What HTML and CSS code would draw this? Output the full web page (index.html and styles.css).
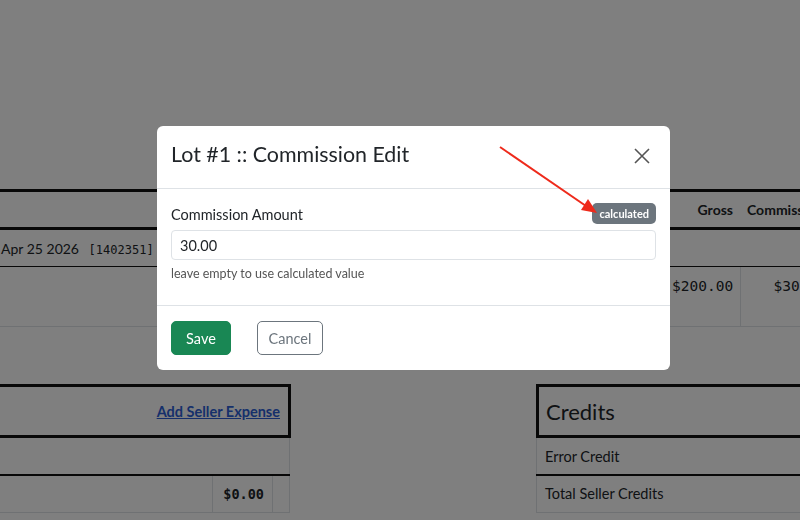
FILE: index.html
```html
<html>
    <head>
        <title>Lot Commission</title>
        <link rel="stylesheet" href="styles.css">
    </head>

    <body>
        <div class="page">
            <table class="lots">
                <tr class="lots-head">
                    <th class="c-desc"></th>
                    <th class="c-gross">Gross</th>
                    <th class="c-comm">Commission</th>
                </tr>
                <tr class="lots-group">
                    <td colspan="3">Apr 25 2026 <span class="mono">[1402351]</span></td>
                </tr>
                <tr class="lots-row">
                    <td></td>
                    <td class="num">$200.00</td>
                    <td class="num left">$30.00</td>
                </tr>
            </table>

            <div class="panels">
                <div class="panel expenses">
                    <div class="panel-title right">
                        <a href="#" class="link">Add Seller Expense</a>
                    </div>
                    <table class="ptable">
                        <tr class="blank"><td colspan="3"></td></tr>
                        <tr class="total">
                            <td class="wide"></td>
                            <td class="num">$0.00</td>
                            <td class="tiny"></td>
                        </tr>
                    </table>
                </div>

                <div class="panel credits">
                    <div class="panel-title">
                        <h2>Credits</h2>
                    </div>
                    <table class="ptable">
                        <tr class="blank"><td>Error Credit</td></tr>
                        <tr class="total"><td>Total Seller Credits</td></tr>
                    </table>
                </div>
            </div>
        </div>

        <div class="backdrop">
            <div class="modal">
                <div class="modal-header">
                    <h5 class="modal-title">Lot #1 :: Commission Edit</h5>
                    <button class="close">
                        <svg width="16" height="16" viewBox="0 0 16 16">
                            <path d="M1 1 L15 15 M15 1 L1 15" stroke="#555" stroke-width="1.6" fill="none"/>
                        </svg>
                    </button>
                </div>
                <div class="modal-body">
                    <div class="label-row">
                        <label>Commission Amount</label>
                        <span class="badge">calculated</span>
                    </div>
                    <input class="field" type="text" value="30.00">
                    <div class="help">leave empty to use calculated value</div>
                </div>
                <div class="modal-footer">
                    <button class="btn save">Save</button>
                    <button class="btn cancel">Cancel</button>
                </div>
            </div>

            <svg class="arrow" width="800" height="520" viewBox="0 0 800 520">
                <line x1="500" y1="147" x2="586" y2="206" stroke="#ee2a1b" stroke-width="2"/>
                <polygon points="597,213 581,210 588,199" fill="#ee2a1b"/>
            </svg>
        </div>
    </body>
</html>
```

FILE: styles.css
```css
body {
    margin: 0;
    font-family: Lato, 'Open Sans', sans-serif;
    color: #212529;
    background: #fff;
    overflow: hidden;
    width: 800px;
    height: 520px;
}

.page {
    padding-top: 189px;
    width: 800px;
}

.mono {
    font-family: 'DejaVu Sans Mono', monospace;
    font-size: 12px;
    margin-left: 6px;
}

/* lot table */
.lots {
    border-collapse: collapse;
    width: 880px;
    table-layout: fixed;
}

.c-desc { width: 651px; }
.c-gross { width: 61px; }
.c-comm { width: 126px; }

.lots-head th {
    border-top: 3px solid #111;
    border-bottom: 3px solid #111;
    height: 38px;
    padding: 0 7px;
    font-size: 14px;
    font-weight: bold;
    text-align: right;
}

.lots-head .c-comm {
    text-align: left;
}

.lots-group td {
    height: 38px;
    padding: 0 1px;
    font-size: 14px;
    border-bottom: 1px solid #111;
}

.lots-row td {
    height: 60px;
    vertical-align: top;
    padding: 11px 7px 0;
    border-bottom: 1px solid #dee2e6;
}

.num {
    font-family: 'DejaVu Sans Mono', monospace;
    font-size: 14.5px;
    text-align: right;
}

.lots-row .num {
    border-right: 1px solid #dee2e6;
}

.lots-row .left {
    padding-left: 33px;
    text-align: left;
}

/* panels */
.panels {
    display: flex;
    justify-content: space-between;
    margin-top: 57px;
}

.panel {
    flex: none;
}

.expenses {
    width: 310px;
    margin-left: -19px;
}

.credits {
    width: 300px;
    margin-right: -36px;
}

.panel-title {
    border: 3px solid #111;
    height: 47px;
    display: flex;
    align-items: center;
    padding: 1px 7px 0;
}

.panel-title.right {
    justify-content: flex-end;
}

.panel-title h2 {
    margin: 0;
    font-size: 22px;
    font-weight: normal;
}

.link {
    color: #2c5fd6;
    font-weight: bold;
    font-size: 14.5px;
    margin-right: 1px;
}

.ptable {
    border-collapse: collapse;
    width: 100%;
}

.expenses .ptable {
    width: 309px;
}

.ptable td {
    font-size: 14.5px;
    padding: 0 8px;
}

.ptable .blank td {
    height: 37px;
    border-bottom: 2px solid #111;
}

.ptable .total td {
    height: 37px;
    border-bottom: 1px solid #dee2e6;
}

.expenses .ptable td {
    border-right: 1px solid #dee2e6;
}

.credits .ptable td {
    border-left: 1px solid #dee2e6;
}

.ptable .total .num {
    font-weight: bold;
    font-size: 13.5px;
    width: 43px;
}

.ptable .tiny {
    width: 0;
}

/* modal */
.backdrop {
    position: fixed;
    top: 0;
    left: 0;
    width: 800px;
    height: 520px;
    background: rgba(0, 0, 0, 0.5);
}

.modal {
    margin: 126px 0 0 157px;
    width: 513px;
    background: #fff;
    border-radius: 6px;
}

.modal-header {
    height: 63px;
    box-sizing: border-box;
    border-bottom: 1px solid #dee2e6;
    display: flex;
    align-items: center;
    justify-content: space-between;
    padding: 0 20px 6px 14px;
}

.modal-title {
    margin: 0;
    font-size: 21.4px;
    font-weight: normal;
}

.close {
    border: none;
    background: none;
    padding: 0;
    width: 16px;
    height: 16px;
    margin-top: 4px;
    cursor: pointer;
}

.modal-body {
    padding: 14px 14px 24px;
}

.label-row {
    display: flex;
    justify-content: space-between;
    align-items: center;
    height: 22px;
    margin-bottom: 5px;
}

label {
    font-size: 14.5px;
}

.badge {
    align-self: flex-start;
    background: #6c757d;
    color: #fff;
    font-size: 11px;
    line-height: 11px;
    font-weight: bold;
    padding: 5px 7px;
    border-radius: 5px;
}

.field {
    display: block;
    width: 100%;
    box-sizing: border-box;
    height: 30px;
    border: 1px solid #dee2e6;
    border-radius: 4px;
    padding: 0 8px;
    font-family: Lato, sans-serif;
    font-size: 14.5px;
    color: #212529;
}

.help {
    margin-top: 6px;
    font-size: 12.5px;
    color: #555;
}

.modal-footer {
    border-top: 1px solid #dee2e6;
    padding: 15px 14px;
    display: flex;
    gap: 26px;
}

.btn {
    height: 34px;
    font-family: Lato, sans-serif;
    font-size: 14.5px;
    border-radius: 5px;
    cursor: pointer;
}

.save {
    background: #198754;
    color: #fff;
    border: 1px solid #198754;
    width: 60px;
}

.cancel {
    background: #fff;
    color: #6c757d;
    border: 1px solid #6c757d;
    width: 66px;
}

.arrow {
    position: absolute;
    top: 0;
    left: 0;
}
```
